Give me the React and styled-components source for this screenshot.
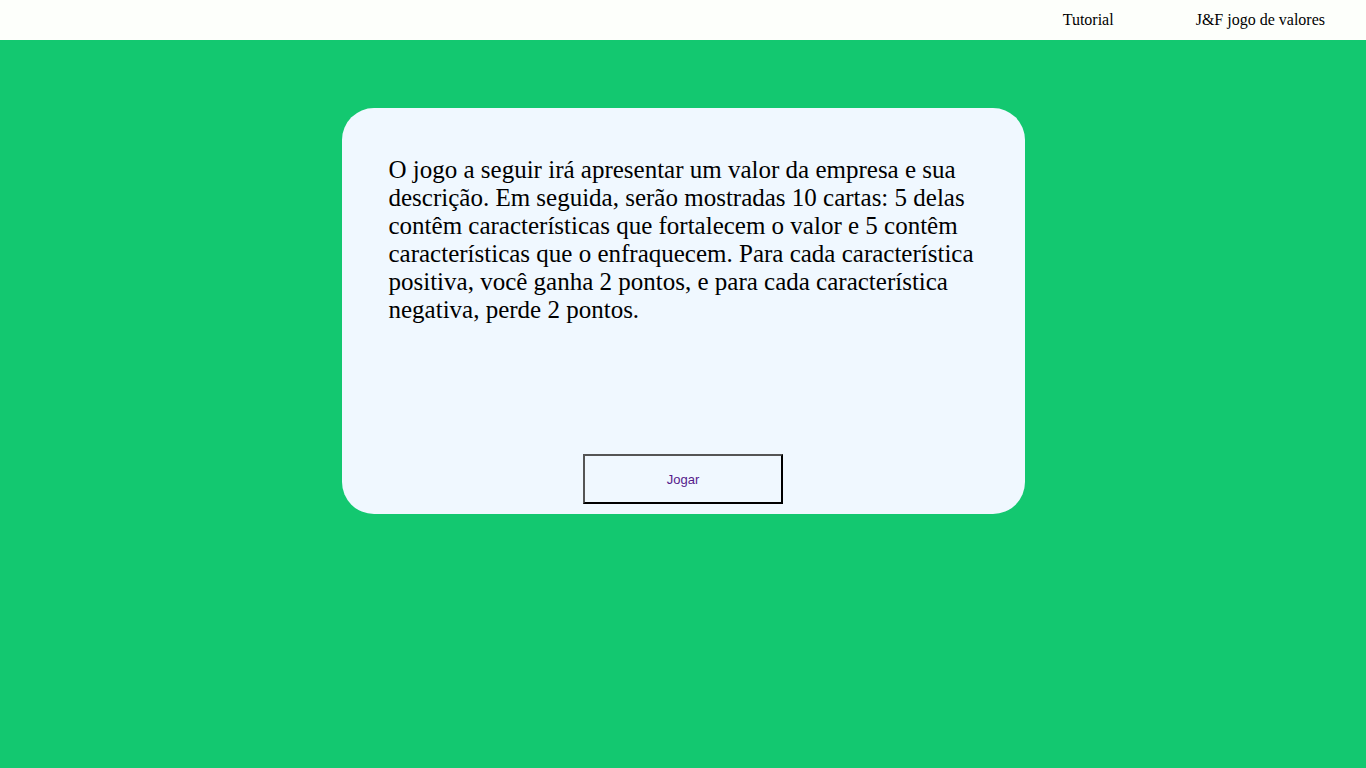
import React from "react";
import styled, { createGlobalStyle } from "styled-components";

const GlobalStyle = createGlobalStyle`
  html, body {
    margin: 0;
    padding: 0;
    background-color: #13c870;
    font-family: "Liberation Serif", "Times New Roman", serif;
  }
`;

const Page = styled.div`
  min-height: 768px;
  background-color: #13c870;
  display: flex;
  flex-direction: column;
`;

const NavBar = styled.nav`
  height: 40px;
  background-color: #fdfffb;
  display: flex;
  justify-content: flex-end;
  align-items: center;
  gap: 82px;
  padding-right: 41px;
`;

const NavLink = styled.span`
  font-size: 16px;
  color: #000;
  cursor: pointer;
`;

const Main = styled.main`
  display: flex;
  justify-content: center;
  padding-top: 68px;
`;

const Card = styled.section`
  width: 683px;
  height: 406px;
  box-sizing: border-box;
  background-color: #f0f8ff;
  border-radius: 32px;
  padding: 48px 47px 10px 47px;
  display: flex;
  flex-direction: column;
  align-items: center;
`;

const Description = styled.p`
  margin: 0;
  align-self: stretch;
  font-size: 25px;
  line-height: 28px;
  color: #000;
  flex: 1;
`;

const PlayButton = styled.button`
  width: 200px;
  height: 50px;
  background: transparent;
  border-style: solid;
  border-width: 2px;
  border-color: #555 #000 #000 #555;
  font-family: "Liberation Sans", Arial, sans-serif;
  font-size: 13px;
  color: #551a8b;
  cursor: pointer;
`;

export default function App() {
  return (
    <Page>
      <GlobalStyle />
      <NavBar>
        <NavLink>Tutorial</NavLink>
        <NavLink>J&amp;F jogo de valores</NavLink>
      </NavBar>
      <Main>
        <Card>
          <Description>
            O jogo a seguir irá apresentar um valor da empresa e sua
            descrição. Em seguida, serão mostradas 10 cartas: 5 delas contêm
            características que fortalecem o valor e 5 contêm características
            que o enfraquecem. Para cada característica positiva, você ganha 2
            pontos, e para cada característica negativa, perde 2 pontos.
          </Description>
          <PlayButton>Jogar</PlayButton>
        </Card>
      </Main>
    </Page>
  );
}
